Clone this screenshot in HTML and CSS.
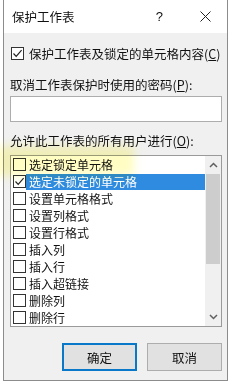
FILE: index.html
```html
<!DOCTYPE html>
<html lang="zh-CN">
<head>
    <meta charset="UTF-8">
    <title>保护工作表</title>
    <link rel="stylesheet" href="styles.css">
</head>
<body>
    <div class="dialog">
        <!-- barra de título -->
        <div class="titlebar">
            <span class="title">保护工作表</span>
            <span class="help">?</span>
            <svg class="close" width="11" height="11" viewBox="0 0 11 11">
                <path d="M0.5 0.5 L10.5 10.5 M10.5 0.5 L0.5 10.5" stroke="#222" stroke-width="1" fill="none"/>
            </svg>
        </div>

        <div class="content">
            <div class="check-row">
                <span class="box checked">
                    <svg width="11" height="11" viewBox="0 0 11 11"><path d="M1.5 5.5 L4.2 8.3 L9.6 2.2" stroke="#222" stroke-width="1.2" fill="none"/></svg>
                </span>
                <span>保护工作表及锁定的单元格内容(<u>C</u>)</span>
            </div>

            <div class="label">取消工作表保护时使用的密码(<u>P</u>):</div>
            <div class="password"></div>

            <div class="label label-list">允许此工作表的所有用户进行(<u>O</u>):</div>
            <div class="list">
                <ul class="items">
                    <li><span class="box"></span><span class="text">选定锁定单元格</span></li>
                    <li class="selected"><span class="box checked"><svg width="11" height="11" viewBox="0 0 11 11"><path d="M1.5 5.5 L4.2 8.3 L9.6 2.2" stroke="#222" stroke-width="1.2" fill="none"/></svg></span><span class="text">选定未锁定的单元格</span></li>
                    <li><span class="box"></span><span class="text">设置单元格格式</span></li>
                    <li><span class="box"></span><span class="text">设置列格式</span></li>
                    <li><span class="box"></span><span class="text">设置行格式</span></li>
                    <li><span class="box"></span><span class="text">插入列</span></li>
                    <li><span class="box"></span><span class="text">插入行</span></li>
                    <li><span class="box"></span><span class="text">插入超链接</span></li>
                    <li><span class="box"></span><span class="text">删除列</span></li>
                    <li><span class="box"></span><span class="text">删除行</span></li>
                </ul>
                <div class="scrollbar">
                    <svg class="arrow" width="9" height="6" viewBox="0 0 9 6"><path d="M1 5 L4.5 1.5 L8 5" stroke="#606060" stroke-width="1.5" fill="none"/></svg>
                    <div class="thumb"></div>
                    <div class="track"></div>
                    <svg class="arrow" width="9" height="6" viewBox="0 0 9 6"><path d="M1 1 L4.5 4.5 L8 1" stroke="#606060" stroke-width="1.5" fill="none"/></svg>
                </div>
            </div>

            <div class="buttons">
                <button class="btn primary">确定</button>
                <button class="btn">取消</button>
            </div>
        </div>
    </div>

    <!-- resaltado amarillo -->
    <div class="marker"></div>
</body>
</html>
```

FILE: styles.css
```css
body {
    margin: 0;
    background: #fff;
    font-family: "Noto Sans CJK SC", "Liberation Sans", sans-serif;
    font-size: 12px;
    color: #111;
}
.dialog {
    margin-left: 3px;
    width: 225px;
    height: 381px;
    box-sizing: border-box;
    border: 1px solid #8c8c8c;
    border-top: 0;
    background: #f0f0f0;
    display: flex;
    flex-direction: column;
}
.titlebar {
    height: 33px;
    background: #fff;
    display: flex;
    align-items: center;
    padding-left: 8px;
    font-size: 12.5px;
}
.title {
    flex: 1;
}
.help {
    font-family: "Liberation Sans", sans-serif;
    font-size: 13px;
    margin-right: 37px;
}
.close {
    margin-right: 16px;
}
.content {
    padding: 0 5px 0 6px;
}
.check-row {
    margin-top: 12px;
    height: 17px;
    display: flex;
    align-items: center;
    gap: 5px;
    padding-left: 1px;
    font-size: 12.5px;
}
u {
    text-decoration: underline;
    text-underline-offset: 1px;
}
.box {
    width: 13px;
    height: 13px;
    box-sizing: border-box;
    border: 1px solid #333;
    background: #fff;
    display: flex;
    align-items: center;
    justify-content: center;
    flex-shrink: 0;
}
.label {
    margin-top: 14px;
    line-height: 17px;
    font-size: 12.5px;
}
.label-list {
    margin-top: 10px;
}
.password {
    margin-top: 3px;
    height: 26px;
    box-sizing: border-box;
    border: 1px solid #adadad;
    background: #fff;
}
.list {
    margin-top: 6px;
    height: 172px;
    box-sizing: border-box;
    border: 1px solid #9a9a9a;
    background: #fff;
    display: flex;
    overflow: hidden;
}
.items {
    list-style: none;
    margin: 0;
    padding: 0;
    flex: 1;
}
.items li {
    height: 17px;
    display: flex;
    align-items: center;
    padding-left: 2px;
}
.items .text {
    flex: 1;
    height: 16px;
    line-height: 16px;
    padding-left: 3px;
    margin-left: 0;
}
.items li.selected .text {
    background: #2f8be0;
    color: #fff;
}
.scrollbar {
    width: 16px;
    background: #f0f0f0;
    display: flex;
    flex-direction: column;
    align-items: center;
}
.arrow {
    margin: 6px 0;
}
.thumb {
    width: 14px;
    height: 90px;
    background: #cdcdcd;
    margin-top: 0;
}
.track {
    flex: 1;
}
.buttons {
    margin-top: 16px;
    display: flex;
    justify-content: flex-end;
    gap: 10px;
}
.btn {
    width: 75px;
    height: 28px;
    box-sizing: border-box;
    border: 1px solid #adadad;
    background: #e1e1e1;
    font-family: "Noto Sans CJK SC", sans-serif;
    font-size: 12.5px;
    color: #111;
    padding: 0;
}
.btn.primary {
    border: 2px solid #0a78c8;
}
.marker {
    position: absolute;
    left: -4px;
    top: 146px;
    width: 138px;
    height: 30px;
    background: rgba(255, 250, 120, 0.45);
    filter: blur(5px);
    mix-blend-mode: multiply;
    pointer-events: none;
}
```
